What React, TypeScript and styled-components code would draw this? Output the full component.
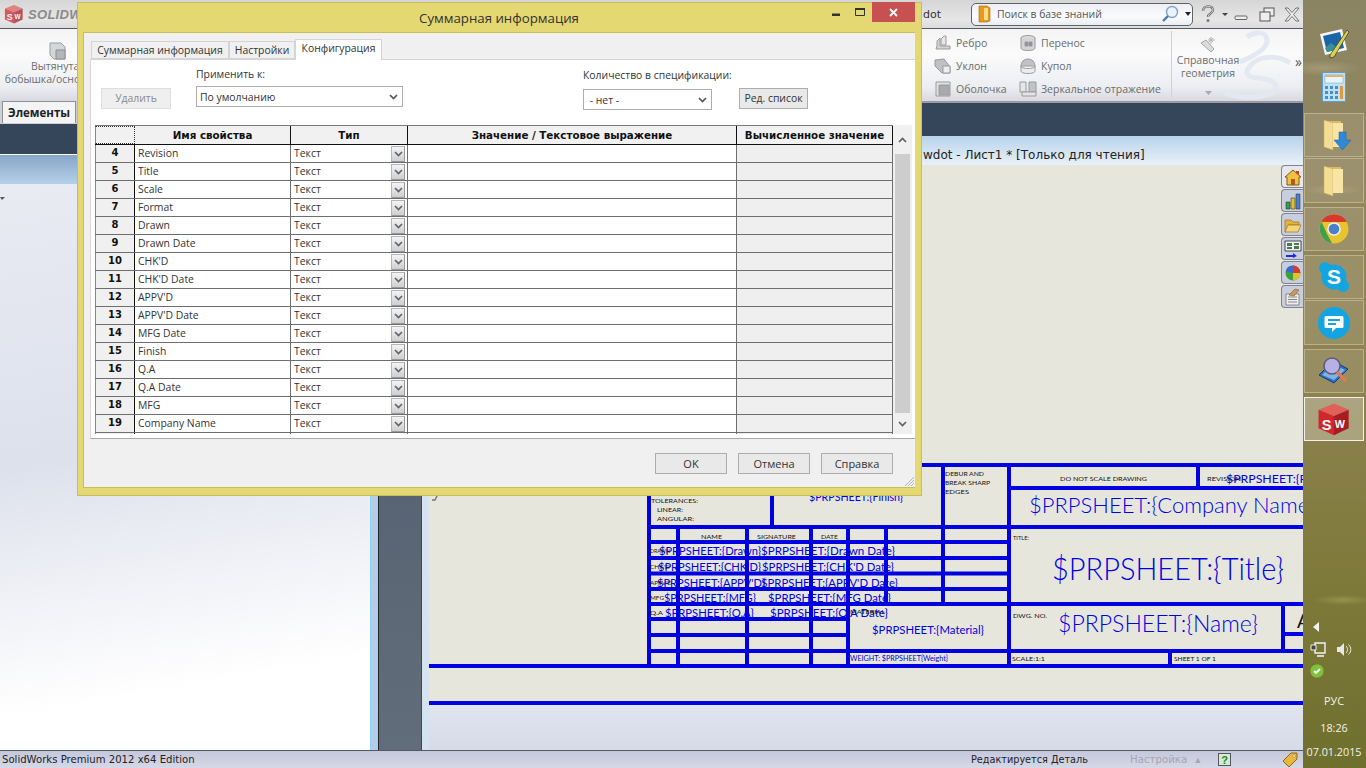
import React from "react";
import styled, { createGlobalStyle } from "styled-components";

const UI = `"Open Sans", "Noto Sans", "Liberation Sans", sans-serif`;
const TAHOMA = `"DejaVu Sans", "Noto Sans", sans-serif`;

const Global = createGlobalStyle`
  html, body { margin: 0; padding: 0; width: 1366px; height: 768px; overflow: hidden; background: #fff; }
  * { box-sizing: border-box; }
`;

const Page = styled.div`
  position: relative; display: flex; width: 1366px; height: 768px; overflow: hidden;
  font-family: ${UI}; font-size: 10.4px; color: #222;
`;
const AppWin = styled.div`display: flex; flex-direction: column; width: 1303px; height: 768px;`;

const Gapped = styled.svg<{ $ml?: number; $mt?: number }>`
  flex: none; margin-left: ${p => p.$ml ?? 0}px; margin-top: ${p => p.$mt ?? 0}px;
`;

/* ---------- title bar ---------- */
const TitleBar = styled.div`
  display: flex; align-items: center; height: 29px; flex: none; padding-left: 4px;
  background: linear-gradient(#d6d6d6, #e6e6e6 70%, #dcdcdc); border-bottom: 1px solid #555a62;
`;
const Brand = styled.span`
  margin-left: 4px; font: italic bold 13px "Liberation Sans", sans-serif; color: #8a8a8a; letter-spacing: .3px;
`;
const TitleRight = styled.div`
  margin-left: auto; display: flex; align-items: center; width: 381px; height: 100%; flex: none;
`;
const DocName = styled.span`
  width: 49px; flex: none; padding-left: 1px; font: 11px ${TAHOMA}; color: #333;
`;
const SearchBox = styled.div`
  display: flex; align-items: center; flex: none; width: 222px; height: 23px; padding: 0 1px 0 6px; gap: 6px;
  border: 1px solid #5d6168; border-radius: 5px; background: linear-gradient(#eef0f6, #fafbfd 60%, #e8ecf4);
  font: 10.4px ${UI}; color: #555;
`;
const SearchText = styled.span`flex: 1; white-space: nowrap;`;
const WinTools = styled.div`display: flex; align-items: center; flex: none; margin-left: 7px; gap: 6px;`;

/* ---------- ribbon ---------- */
const Ribbon = styled.div`
  position: relative; display: flex; height: 72px; flex: none; overflow: hidden;
  background: linear-gradient(#f4f4f4, #fbfbfb 35%, #eceef2 80%, #d9dae0);
`;
const BigTool = styled.div`
  display: flex; flex-direction: column; align-items: center; width: 98px; padding-top: 13px; margin-left: 9px;
  font: 10.5px/13px ${UI}; color: #6e6e6e; text-align: center; white-space: nowrap;
`;
const Watermark = styled.svg`position: absolute; left: 1222px; top: 0;`;
const RibbonRight = styled.div`
  position: relative; margin-left: auto; display: flex; width: 369px; padding-top: 2px;
`;
const ToolCols = styled.div`display: grid; grid-template-columns: 85px 152px; grid-auto-rows: 23px; align-items: center;`;
const SmallTool = styled.div`
  display: flex; align-items: center; gap: 4px; font: 10.5px ${UI}; color: #6b6b6b; white-space: nowrap;
`;
const RefTool = styled.div`
  display: flex; flex-direction: column; align-items: center; width: 73px; padding-top: 5px;
  border-left: 1px solid #cfd0d4; height: 66px;
  font: 10.5px/13px ${UI}; color: #6e6e6e; text-align: center;
`;
const More = styled.span`position: absolute; right: 1px; top: 23px; font: 14px ${UI}; color: #555;`;

/* ---------- workspace ---------- */
const Workspace = styled.div`display: flex; flex: 1; min-height: 0;`;
const LeftPane = styled.div`
  display: flex; flex-direction: column; width: 379px; flex: none;
  border-right: 1px solid #20262e;
`;
const TabStrip = styled.div`display: flex; height: 23px; flex: none; padding-left: 2px; background: #cfd0d6;`;
const MainTab = styled.div`
  width: 74px; height: 22px; padding-left: 5px; background: #f4f4f4; border: 1px solid #8b8f96; border-bottom: 0;
  font: bold 11.5px/21px ${UI}; color: #222;
`;
const PaneHead = styled.div`height: 31px; flex: none; background: #36465a; border-bottom: 1px solid #fff;`;
const PaneBand = styled.div`
  height: 29px; flex: none; background: linear-gradient(#87a6c8, #b6d0e8); border-right: 7px solid #a9c6e4;
`;
const PaneBody = styled.div`
  position: relative; flex: 1; background: linear-gradient(170deg, #e9ebf3, #dde1ec 45%, #f3f4f8 70%, #ffffff 85%);
  border-right: 7px solid #b4cde6; box-shadow: inset -1px 0 0 #8fd0f5;
`;
const PaneCaret = styled.i`
  position: absolute; left: 0; top: 13px; width: 0; height: 0;
  border: 3px solid transparent; border-top-color: #555; border-left-width: 2px;
`;
const Slate = styled.div`
  width: 43px; flex: none; background: linear-gradient(#4b5768, #626d7b); border-right: 1px solid #3f4752;
`;
const DocPane = styled.div`display: flex; flex-direction: column; flex: 1; min-width: 0;`;
const DarkBand = styled.div`height: 35px; flex: none; background: #36465a; border-top: 2px solid #9a9ca2;`;
const DocTitle = styled.div`
  height: 29px; flex: none; padding-left: 501px; background: linear-gradient(#b9d3ea, #e8f1f8);
  font: 12px/38px ${TAHOMA}; color: #222; white-space: nowrap;
`;
const SheetWrap = styled.div`
  display: flex; flex-direction: column; flex: 1; min-height: 0; padding-left: 7px;
  background: linear-gradient(#d8e4f2, #d5e2f0);
`;
const Sheet = styled.div`
  position: relative; height: 540px; flex: none; background: #e6e6dc;
`;
const Below = styled.div`flex: 1; background: linear-gradient(#e0e4ef, #d6dbe8);`;
const Drawing = styled.svg`display: block;`;
const SideTabs = styled.div`position: absolute; right: 0; top: 0; display: flex; flex-direction: column;`;
const SideTab = styled.div<{ $first?: boolean }>`
  display: flex; align-items: center; justify-content: center; width: 22px; height: 23px; margin-bottom: 1px;
  background: ${p => (p.$first ? "#e6e8ee" : "#c9cede")};
  border: 1px solid #7e8494; border-right: 0; border-radius: 4px 0 0 4px;
`;

/* ---------- status bar ---------- */
const StatusBar = styled.div`
  display: flex; align-items: center; height: 18px; flex: none; padding-left: 2px;
  background: linear-gradient(#c5c8dc, #d6d8e6); border-top: 1px solid #555a62;
  font: 10.1px ${TAHOMA}; color: #222; white-space: nowrap;
`;
const StatusEdit = styled.span`margin-left: auto; width: 159px; font-size: 9.7px;`;
const StatusCfg = styled.span`width: 88px; font-size: 10.2px; color: #a3a6b2;`;
const StatusArrow = styled.span`margin-left: 8px;`;
const StatusHelp = styled.span`
  display: inline-flex; align-items: center; justify-content: center; width: 13px; height: 13px;
  border: 1px solid #556; background: #d6ead0; color: #1b8a1b; font: bold 11px "Liberation Sans", sans-serif;
`;
const StatusTag = styled.span`margin-left: 51px; margin-right: 5px; display: flex;`;

/* ---------- desktop strip ---------- */
const Desktop = styled.div`
  display: flex; flex-direction: column; width: 63px; height: 768px; flex: none; padding: 21px 2px 0 1px; color: #fff;
  background:
    radial-gradient(ellipse 40px 8px at 20px 68px, rgba(190,180,140,.45), transparent),
    radial-gradient(ellipse 30px 5px at 30px 190px, rgba(190,175,120,.35), transparent),
    radial-gradient(ellipse 30px 5px at 40px 600px, rgba(200,190,110,.35), transparent),
    linear-gradient(#8b8462 0, #93875f 25%, #8d8252 50%, #7e7a3a 75%, #6f6f2e 100%);
`;
const Launcher = styled.div`display: flex; justify-content: center; align-items: center; height: 44px;`;
const Tile = styled.div<{ $gap?: number; $h?: number; $active?: boolean }>`
  display: flex; align-items: center; justify-content: center; flex: none;
  height: ${p => p.$h ?? 44}px; margin-top: ${p => p.$gap ?? 0}px;
  background: ${p => (p.$active ? "rgba(255,255,255,.28)" : "rgba(255,255,255,.09)")};
  border: ${p => (p.$active ? "1px solid #f4f2e4" : "1px solid rgba(235,225,185,.42)")};
`;
const Tray = styled.div`
  margin-top: auto; display: flex; flex-direction: column; align-items: center; padding-bottom: 8px;
  font: 10.8px/16px ${UI}; color: #f3f3ea; text-align: center;
`;
const TrayRow = styled.div<{ $mt?: number }>`
  display: flex; align-self: stretch; gap: 10px; padding-left: 6px; align-items: flex-start; margin-top: ${p => p.$mt ?? 0}px;
`;
const TrayText = styled.div<{ $mt?: number }>`margin-top: ${p => p.$mt ?? 0}px; white-space: nowrap;`;

/* ---------- dialog ---------- */
const Dialog = styled.div`
  position: absolute; left: 77px; top: 2px; width: 845px; height: 494px; display: flex; flex-direction: column;
  background: #e4d872; border: 1px solid #c8bc5c; padding: 0 6px 7px 5px; z-index: 5;
`;
const DlgHead = styled.div`position: relative; height: 29px; flex: none; display: flex; align-items: center; justify-content: center;`;
const DlgTitle = styled.span`font: 13.25px ${UI}; color: #333; margin-top: 1px;`;
const DlgControls = styled.div`position: absolute; right: 0; top: -1px; display: flex; align-items: flex-start;`;
const Close = styled.div`
  width: 43px; height: 20px; background: #c75050; color: #fff;
  display: flex; align-items: center; justify-content: center;
`;
const CtlBtn = styled.div`display: flex; align-items: center; justify-content: center; width: 24px; height: 20px;`;
const DlgInner = styled.div`
  position: relative; flex: 1; display: flex; flex-direction: column; background: #f0f0f0;
  border: 1px solid #c8bc5c; border-width: 1px 0 1px 1px; padding-top: 6px;
`;
const Tabs = styled.div`display: flex; align-items: flex-end; height: 20px; flex: none; margin-left: 7px;`;
const Tab = styled.div<{ $active?: boolean; $w: number }>`
  width: ${p => p.$w}px; height: ${p => (p.$active ? 21 : 18)}px; margin-bottom: ${p => (p.$active ? -1 : 0)}px;
  text-align: center; position: relative; z-index: 1;
  background: ${p => (p.$active ? "#fff" : "#f0f0f0")};
  border: 1px solid #d4d4d4; border-bottom: ${p => (p.$active ? "0" : "1px solid #d4d4d4")};
  font: 10.4px/${p => (p.$active ? 17 : 16)}px ${UI}; color: #333; white-space: nowrap;
`;
const TabPage = styled.div`
  height: 380px; flex: none; margin-left: 6px; padding-left: 1px;
  background: #fff; border-top: 1px solid #d4d4d4; border-bottom: 1px solid #a8a8a8; border-left: 1px solid #d8d8d8;
  display: flex; flex-direction: column;
`;
const FormRow = styled.div`display: flex; height: 65px; flex: none; padding-left: 9px;`;
const FlatBtn = styled.div<{ $disabled?: boolean; $w: number; $mt: number; $ml?: number }>`
  width: ${p => p.$w}px; height: 21px; margin-top: ${p => p.$mt}px; margin-left: ${p => p.$ml ?? 0}px; text-align: center; flex: none;
  background: ${p => (p.$disabled ? "#efefef" : "#e9e9e9")};
  border: 1px solid ${p => (p.$disabled ? "#dedede" : "#adadad")};
  font: 10.4px/19px ${UI}; color: ${p => (p.$disabled ? "#8a8a8a" : "#333")}; white-space: nowrap;
`;
const Field = styled.div<{ $ml: number; $w: number }>`
  display: flex; flex-direction: column; margin-left: ${p => p.$ml}px; width: ${p => p.$w}px; flex: none;
`;
const FieldLabel = styled.span<{ $mt: number; $mb: number }>`
  margin-top: ${p => p.$mt}px; margin-bottom: ${p => p.$mb}px; font: 10.4px/15px ${UI}; color: #333; white-space: nowrap;
`;
const Select = styled.div`
  display: flex; align-items: center; justify-content: space-between; height: 21px; padding: 0 4px 0 3px;
  border: 1px solid #adadad; background: #fff; font: 10.4px ${UI}; color: #333;
`;
const GridWrap = styled.div`display: flex; height: 309px; flex: none; margin-left: 3px; width: 817px;`;
const GridTable = styled.div`width: 798px; height: 309px; overflow: hidden; border-top: 1px solid #777;`;
const GridRow = styled.div<{ $head?: boolean }>`
  display: grid; grid-template-columns: 40px 156px 117px 329px 156px;
  height: ${p => (p.$head ? 19 : 18)}px;
  border-bottom: 1px solid ${p => (p.$head ? "#111" : "#6e6e6e")};
`;
const HeadCell = styled.div`
  background: #f1f1f1; border-right: 1px solid #111; text-align: center;
  font: bold 10.3px/18px ${TAHOMA}; color: #111; white-space: nowrap;
`;
const Corner = styled.div`
  background: #f1f1f1; border: 1px dotted #333; border-left: 1px solid #888;
`;
const NumCell = styled.div`
  background: #f0f0f0; border-right: 1px solid #111; border-left: 1px solid #888; text-align: center;
  font: bold 10px/15px ${TAHOMA}; color: #111;
`;
const NameCell = styled.div`
  padding-left: 3px; background: #fff; border-right: 1px solid #6e6e6e; font: 10.4px/16px ${UI}; color: #333; white-space: nowrap;
`;
const TypeCell = styled(NameCell)`display: flex; justify-content: space-between; padding-right: 2px;`;
const ValueCell = styled.div`background: #fff; border-right: 1px solid #6e6e6e;`;
const CalcCell = styled.div`background: #efefef; border-right: 1px solid #6e6e6e;`;
const DropBtn = styled.div`
  display: flex; align-items: center; justify-content: center; width: 14px; height: 16px; margin-top: 1px;
  background: linear-gradient(#f4f4f4, #cfcfcf); border: 1px solid #a5a5a5; border-color: #b5b5b5 #999 #999 #b5b5b5;
`;
const Scroll = styled.div`
  display: flex; flex-direction: column; align-items: center; width: 19px; height: 309px; background: #f0f0f0; padding: 0 1px;
`;
const ScrollBtn = styled.div<{ $h: number }>`display: flex; align-items: center; justify-content: center; height: ${p => p.$h}px; flex: none;`;
const ScrollThumb = styled.div`width: 15px; height: 259px; flex: none; background: #cdcdcd;`;
const DlgFooter = styled.div`display: flex; justify-content: flex-end; gap: 11px; padding: 14px 22px 0 0;`;
const FootBtn = styled.div`
  width: 72px; height: 21px; background: #e9e9e9; border: 1px solid #adadad; text-align: center;
  font: 11px/19px ${UI}; color: #333;
`;
const Grip = styled.svg`position: absolute; right: 0; bottom: 0;`;

/* ---------- small drawings ---------- */
const Chev = ({ c = "#555" }: { c?: string }) => (
  <svg width="9" height="6" viewBox="0 0 9 6"><path d="M1 1l3.500 3.500L8 1" fill="none" stroke={c} strokeWidth="1.700" /></svg>
);
const ChevUp = () => (
  <svg width="9" height="6" viewBox="0 0 9 6"><path d="M1 5l3.500-3.500L8 5" fill="none" stroke="#606060" strokeWidth="1.700" /></svg>
);

const SwCube = ({ s = 22, op = 1 }: { s?: number; op?: number }) => (
  <svg width={s} height={s} viewBox="0 0 44 44" opacity={op}>
    <path d="M22 2l19 8-19 8-20-8z" fill="#e2605a" />
    <path d="M2 10l20 8v25L2 34z" fill="#d0262c" />
    <path d="M22 18l19-8v24l-19 9z" fill="#a81c22" />
    <text x="6" y="36" fontFamily="Liberation Sans" fontWeight="bold" fontSize="19" fill="#fff">S</text>
    <text x="23" y="34" fontFamily="Liberation Sans" fontWeight="bold" fontSize="14" fill="#fff">W</text>
  </svg>
);

type GlyphKind = "rib" | "draft" | "shell" | "wrap" | "dome" | "mirror";
const RibbonGlyph = ({ k }: { k: GlyphKind }) => {
  const st = { stroke: "#9a9a9a", strokeWidth: 1, fill: "#d4d4d6" };
  return (
    <svg width="18" height="18" viewBox="0 0 18 18">
      {k === "rib" && (<g {...st}><path d="M2 15h14v-3H6V4L3 7v5z" /><path d="M7 11V5l3-3h2v9z" fill="#e6e6e8" /></g>)}
      {k === "draft" && (<g {...st}><path d="M1 3l9-1 6 8v6H8L1 9z" fill="#bfbfc4" /><path d="M9 9h7v7H9z" fill="#eeeeee" /></g>)}
      {k === "shell" && (<g {...st}><path d="M2 2h14v14H2z" fill="#e2e2e4" /><path d="M5 5h10v10H5z" fill="#a9a9ae" /></g>)}
      {k === "wrap" && (<g {...st}><ellipse cx="9" cy="4" rx="7" ry="2.500" fill="#dadadc" /><path d="M2 4v10c0 1.500 3 2.500 7 2.500s7-1 7-2.500V4" /><path d="M6 8h3v4H6zM10 8h3v4h-3z" fill="#8f8f94" /></g>)}
      {k === "dome" && (<g {...st}><path d="M2 9c0-4 3-7 7-7s7 3 7 7z" fill="#c2c2c6" /><path d="M2 9v5c0 1.500 3 2.500 7 2.500s7-1 7-2.500V9c0 1.500-3 2.500-7 2.500S2 10.500 2 9z" fill="#ececee" /></g>)}
      {k === "mirror" && (<g {...st}><path d="M1 2h6v10H1z" fill="#e6e6e8" /><path d="M10 2h7v10h-7z" fill="#c2c2c6" /><path d="M3 12h14v4H3z" fill="#e4e4e6" /></g>)}
    </svg>
  );
};

const FolderIcon = ({ arrow }: { arrow?: boolean }) => (
  <svg width="34" height="34" viewBox="0 0 34 34">
    <path d="M9 3h15v24H9z" fill="#d9bc62" />
    <path d="M7 2l9 3v27l-9-3z" fill="#f3dd94" stroke="#c9a955" strokeWidth=".5" />
    <path d="M16 5h10v24H16z" fill="#f7e5a6" />
    {arrow && <path d="M22 14h7v8h5l-8.500 10L17 22h5z" fill="#2f88d8" stroke="#1c5fa8" strokeWidth=".5" />}
  </svg>
);
const ChromeIcon = () => (
  <svg width="30" height="30" viewBox="-15 -15 30 30">
    <circle r="14.500" fill="#e8c42e" />
    <path d="M-12.500-7.200A14.500 14.500 0 0 1 12.500-7.200L0-7.200z" fill="#d8392b" />
    <path d="M-12.500-7.200L-7 5 -2 14.300A14.500 14.500 0 0 1-12.500-7.200z" fill="#3f9f4a" />
    <path d="M-12.500-7.500A14.500 14.500 0 0 1 0-14.500A14.500 14.500 0 0 1 12.600-7.200L0-7z" fill="#d8392b" />
    <circle r="6.800" fill="#eef2f5" />
    <circle r="5.300" fill="#4b80c8" />
  </svg>
);
const SkypeIcon = () => (
  <svg width="32" height="32" viewBox="0 0 32 32">
    <circle cx="16" cy="16" r="12.500" fill="#12a5e2" />
    <circle cx="7" cy="7" r="6" fill="#12a5e2" />
    <circle cx="25" cy="25" r="6" fill="#12a5e2" />
    <text x="16" y="23" textAnchor="middle" fontFamily="Liberation Sans" fontWeight="bold" fontSize="21" fill="#fff">S</text>
  </svg>
);
const ChatIcon = () => (
  <svg width="32" height="32" viewBox="0 0 32 32">
    <circle cx="16" cy="16" r="16" fill="#12a5e2" />
    <path d="M8 9h16a1.500 1.500 0 0 1 1.500 1.500v9A1.500 1.500 0 0 1 24 21h-6l-4 4v-4H8a1.500 1.500 0 0 1-1.500-1.500v-9A1.500 1.500 0 0 1 8 9z" fill="#fff" />
    <path d="M10 13h12M10 17h8" stroke="#12a5e2" strokeWidth="1.800" />
  </svg>
);
const BookSearch = () => (
  <svg width="32" height="32" viewBox="0 0 32 32">
    <path d="M1 20L15 6l15 8-14 14z" fill="#2f6fc0" stroke="#123e80" />
    <path d="M4 20L15 9l12 6-11 10z" fill="#7fb2e6" />
    <circle cx="14" cy="11" r="8" fill="#b7b0e2" stroke="#5a5a7a" strokeWidth="1.500" />
    <path d="M19 17l9 9" stroke="#e07a50" strokeWidth="3.500" />
  </svg>
);
const PenIcon = () => (
  <svg width="34" height="34" viewBox="0 0 34 34">
    <path d="M3 8l22-5 5 21-22 5z" fill="#f5f5f5" />
    <path d="M6 10l17-4 4 16-17 4z" fill="#1d63a8" />
    <path d="M8 22l6-5 8 6-12 3z" fill="#3a8f9a" />
    <path d="M13 29L30 4l2 2-15 25-4 1z" fill="#d9d24a" stroke="#333" strokeWidth=".7" />
  </svg>
);
const CalcIcon = () => (
  <svg width="24" height="30" viewBox="0 0 24 30">
    <rect x=".5" y=".5" width="23" height="29" fill="#bfe0f5" stroke="#5b9fd0" />
    <rect x="3" y="3" width="18" height="8" fill="#e8f4fc" stroke="#7aa" strokeWidth=".5" />
    <rect x="3" y="3" width="18" height="2" fill="#e6b070" />
    <path d="M3 14h3v3H3zM8 14h3v3H8zM13 14h3v3h-3zM3 19h3v3H3zM8 19h3v3H8zM13 19h3v3h-3zM3 24h3v3H3zM8 24h3v3H8zM13 24h3v3h-3z" fill="#4a8fc4" />
    <path d="M18 14h3v13h-3z" fill="#e09a3c" />
  </svg>
);

const sideIcons = [
  <svg key="a" width="18" height="18" viewBox="0 0 18 18"><path d="M1 9l8-7 8 7h-2v8H3V9z" fill="#f0c040" stroke="#7a5a14" /><path d="M7 11h4v6H7z" fill="#b05a20" /><path d="M12 3h3v4l-3-2z" fill="#c8402c" /></svg>,
  <svg key="b" width="18" height="18" viewBox="0 0 18 18"><path d="M2 10h4v7H2z" fill="#3aa03a" stroke="#222" strokeWidth=".5" /><path d="M7 6h4v11H7z" fill="#e0c030" stroke="#222" strokeWidth=".5" /><path d="M12 2h4v15h-4z" fill="#4a80d0" stroke="#222" strokeWidth=".5" /></svg>,
  <svg key="c" width="18" height="18" viewBox="0 0 18 18"><path d="M1 4h6l2 2h6v3H5l-3 7H1z" fill="#e2b23c" stroke="#9a7420" strokeWidth=".7" /><path d="M4 9h13l-3 7H1z" fill="#f4d578" stroke="#9a7420" strokeWidth=".7" /></svg>,
  <svg key="d" width="18" height="18" viewBox="0 0 18 18"><path d="M1 1h16v10H1z" fill="#eef0f4" stroke="#223" strokeWidth=".8" /><path d="M3 3h5v3H3zM10 3h5v2h-5zM10 6h5v3h-5zM3 7h5v2H3z" fill="#4a7a4a" /><path d="M2 15h7v-2l4 3-4 2v-1H2z" fill="#1a2ee0" /></svg>,
  <svg key="e" width="18" height="18" viewBox="0 0 18 18"><circle cx="9" cy="9" r="7.500" fill="#3aa03a" /><path d="M9 1.500A7.500 7.500 0 0 0 1.700 7.500L9 9z" fill="#3a6ad0" /><path d="M9 1.500A7.500 7.500 0 0 1 16.500 9H9z" fill="#d83a2c" /><path d="M9 9h7.500A7.500 7.500 0 0 1 9 16.500z" fill="#e0c030" /></svg>,
  <svg key="f" width="18" height="18" viewBox="0 0 18 18"><path d="M2 6h13v11H2z" fill="#eeeeee" stroke="#666" strokeWidth=".7" /><path d="M4 9h9M4 11.500h9M4 14h9" stroke="#888" /><path d="M5 7l6-6 4 1-5 6z" fill="#c89a5a" stroke="#6a4a20" strokeWidth=".5" /></svg>,
];

/* ---------- drawing data ---------- */
const BLUE = "#0000e0";
const H: [number, number, number][] = [
  [465, 649, 1303], [488, 1009, 1303], [527, 649, 1303], [542, 649, 1009], [558, 649, 1009], [573.500, 649, 1009], [589, 649, 1009],
  [604, 649, 1303], [619, 649, 848], [635, 649, 848], [651, 849, 1303], [651, 649, 848], [666, 429, 1303], [703, 429, 1303], [634, 1283, 1303],
];
const V: [number, number, number][] = [
  [649, 465, 666], [772, 465, 527], [943, 465, 604], [1009, 465, 666], [1198, 465, 488], [678, 527, 666], [747, 527, 666],
  [811, 527, 666], [848, 527, 666], [886, 527, 604], [1283, 604, 651], [1170, 651, 666],
];
type Lbl = [string, number, number, number, number];
const blueText: Lbl[] = [
  ["$PRPSHEET:{Title}", 1052, 580, 232, 32],
  ["$PRPSHEET:{Company Name}", 1029, 513, 286, 21],
  ["$PRPSHEET:{Name}", 1058, 632, 200, 24],
  ["$PRPSHEET:{Revision}", 1226, 483, 122, 12],
  ["$PRPSHEET:{Finish}", 809, 501, 94, 12],
  ["$PRPSHEET:{Drawn}", 659, 555, 102, 12],
  ["$PRPSHEET:{Drawn Date}", 761, 555, 134, 12],
  ["$PRPSHEET:{CHK'D}", 658, 571, 103, 12],
  ["$PRPSHEET:{CHK'D Date}", 762, 571, 132, 12],
  ["$PRPSHEET:{APPV'D}", 657, 587, 108, 12],
  ["$PRPSHEET:{APPV'D Date}", 761, 587, 137, 12],
  ["$PRPSHEET:{MFG}", 664, 602, 92, 12],
  ["$PRPSHEET:{MFG Date}", 768, 602, 123, 12],
  ["$PRPSHEET:{Q.A}", 665, 617, 89, 12],
  ["$PRPSHEET:{Q.A Date}", 770, 617, 118, 12],
  ["$PRPSHEET:{Material}", 872, 634, 112, 12],
  ["WEIGHT: $PRPSHEET{Weight}", 850, 661, 98, 7],
];
const blackText: Lbl[] = [
  ["DO NOT SCALE DRAWING", 1060, 481, 87, 6.500],
  ["REVISION", 1207, 481, 34, 6.500],
  ["TITLE:", 1013, 540, 16, 6.500],
  ["DWG. NO.", 1013, 618, 34, 6.500],
  ["SCALE:1:1", 1012, 661, 33, 6.500],
  ["SHEET 1 OF 1", 1174, 661, 42, 6.500],
  ["DEBUR AND", 945, 476, 39, 6.500],
  ["BREAK SHARP", 945, 485, 45, 6.500],
  ["EDGES", 945, 494, 24, 6.500],
  ["TOLERANCES:", 651, 503, 47, 6.500],
  ["LINEAR:", 657, 512, 26, 6.500],
  ["ANGULAR:", 657, 521, 37, 6.500],
  ["NAME", 701, 539, 21, 6.500],
  ["SIGNATURE", 757, 539, 39, 6.500],
  ["DATE", 821, 539, 17, 6.500],
  ["DRAWN", 650, 553, 20, 6.500],
  ["CHK'D", 650, 569, 20, 6.500],
  ["APPV'D", 650, 585, 22, 6.500],
  ["MFG", 650, 600, 14, 6.500],
  ["Q.A", 650, 615, 13, 6.500],
  ["MATERIAL", 850, 614, 35, 6.500],
  ["A4", 1297, 628, 24, 20],
];

const rows = ["Revision", "Title", "Scale", "Format", "Drawn", "Drawn Date", "CHK'D", "CHK'D Date", "APPV'D", "APPV'D Date", "MFG Date", "Finish", "Q.A", "Q.A Date", "MFG", "Company Name"];

export default function App() {
  return (
    <Page>
      <Global />
      <AppWin>
        <TitleBar>
          <SwCube s={20} op={0.72} />
          <Brand>SOLIDWORKS</Brand>
          <TitleRight>
            <DocName>dot</DocName>
            <SearchBox>
              <svg width="13" height="18" viewBox="0 0 13 18"><path d="M1 1h8l3 2v13l-3 1H1z" fill="#e99a1c" stroke="#a8640e" strokeWidth=".6" /><path d="M6 3h4v12H6z" fill="#f9dc8a" /></svg>
              <SearchText>Поиск в базе знаний</SearchText>
              <svg width="18" height="18" viewBox="0 0 18 18"><circle cx="11" cy="7" r="5.500" fill="#eaf3fb" stroke="#7da3c4" strokeWidth="1.400" /><path d="M7 11l-5 5" stroke="#4c7ba8" strokeWidth="2.400" /></svg>
              <svg width="6" height="4" viewBox="0 0 6 4"><path d="M0 0h6L3 4z" fill="#222" /></svg>
            </SearchBox>
            <WinTools>
              <svg width="16" height="18" viewBox="0 0 16 18"><path d="M3 6c0-6 10-6 10-1 0 4-5 3-5 7" fill="none" stroke="#666" strokeWidth="2.400" /><path d="M3 6c0-6 10-6 10-1 0 4-5 3-5 7" fill="none" stroke="#eee" strokeWidth=".8" /><circle cx="8" cy="15.500" r="1.500" fill="#777" /></svg>
              <svg width="6" height="3" viewBox="0 0 6 3"><path d="M0 0h6L3 3z" fill="#444" /></svg>
              <svg width="14" height="16" viewBox="0 0 14 16"><rect x="1" y="10" width="12" height="3.500" rx="1" fill="#eee" stroke="#666" /></svg>
              <Gapped $ml={5} width="16" height="15" viewBox="0 0 16 15"><rect x="5" y="1" width="10" height="8" fill="#eee" stroke="#555" /><rect x="1" y="5" width="10" height="9" fill="#eee" stroke="#555" /></Gapped>
              <Gapped $ml={3} width="16" height="15" viewBox="0 0 16 15"><path d="M1 1h3l4 4.500L12 1h3l-5.500 6.500L15 14h-3L8 9.500 4 14H1l5.500-6.500z" fill="#eee" stroke="#666" strokeWidth=".9" /></Gapped>
            </WinTools>
          </TitleRight>
        </TitleBar>

        <Ribbon>
          <Watermark width="76" height="72" viewBox="0 0 76 72">
            <path d="M25 8C32 3 44 1 45 11C46 20 30 28 18 33" fill="none" stroke="#e4e8f0" strokeWidth="5" />
            <path d="M68 34C55 25 38 28 31 34C22 42 22 48 36 49C48 50 56 54 54 60C50 68 22 72 3 64" fill="none" stroke="#e4e8f0" strokeWidth="5" />
          </Watermark>
          <BigTool>
            <svg width="18" height="18" viewBox="0 0 18 18"><path d="M1 1h11l4 4v12H5l-4-4z" fill="#d5d6da" stroke="#9c9da2" /><path d="M7 8h9v9H7z" fill="#b5b6bb" stroke="#8c8d92" /></svg>
            <span>Вытянутая</span>
            <span>бобышка/основание</span>
          </BigTool>
          <RibbonRight>
            <ToolCols>
              <SmallTool><RibbonGlyph k="rib" />Ребро</SmallTool>
              <SmallTool><RibbonGlyph k="wrap" />Перенос</SmallTool>
              <SmallTool><RibbonGlyph k="draft" />Уклон</SmallTool>
              <SmallTool><RibbonGlyph k="dome" />Купол</SmallTool>
              <SmallTool><RibbonGlyph k="shell" />Оболочка</SmallTool>
              <SmallTool><RibbonGlyph k="mirror" />Зеркальное отражение</SmallTool>
            </ToolCols>
            <RefTool>
              <svg width="18" height="18" viewBox="0 0 18 18"><path d="M2 7l5-3 8 9-3 3z" fill="#dcdcdc" stroke="#a5a5a5" /><path d="M12 1v7M9 4h7M10 2l4 4M14 2l-4 4" stroke="#b5b5b5" /></svg>
              <span>Справочная</span>
              <span>геометрия</span>
              <Gapped $mt={11} width="7" height="4" viewBox="0 0 7 4"><path d="M0 0h7L3.500 4z" fill="#aaa" /></Gapped>
            </RefTool>
            <More>»</More>
          </RibbonRight>
        </Ribbon>

        <Workspace>
          <LeftPane>
            <TabStrip><MainTab>Элементы</MainTab></TabStrip>
            <PaneHead />
            <PaneBand />
            <PaneBody><PaneCaret /></PaneBody>
          </LeftPane>
          <Slate />
          <DocPane>
            <DarkBand />
            <DocTitle>wdot - Лист1 * [Только для чтения]</DocTitle>
            <SheetWrap>
              <Sheet>
                <Drawing width="874" height="540" viewBox="429 165 874 540">
                  <path d="M431 493h5l1 3-2 4h-3" fill="none" stroke="#777" strokeWidth="1.500" />
                  {H.map(([y, a, b]) => <rect key={`h${y}${a}`} x={a} y={y - 2} width={b - a} height={4} fill={BLUE} />)}
                  {V.map(([x, a, b]) => <rect key={`v${x}${a}`} x={x - 2} y={a - 2} width={4} height={b - a + 4} fill={BLUE} />)}
                  {blueText.map(([t, x, y, w, s]) => (
                    <text key={t} x={x} y={y} textLength={w} lengthAdjust="spacingAndGlyphs" fontFamily="Lato, 'Liberation Sans', sans-serif" fontWeight={s > 12 ? 300 : 400} fontSize={s} fill={BLUE}>{t}</text>
                  ))}
                  {blackText.map(([t, x, y, w, s]) => (
                    <text key={t} x={x} y={y} textLength={w} lengthAdjust="spacingAndGlyphs" fontFamily="Lato, 'Liberation Sans', sans-serif" fontSize={s} fill="#111">{t}</text>
                  ))}
                </Drawing>
                <SideTabs>
                  {sideIcons.map((ic, i) => <SideTab key={i} $first={i === 0}>{ic}</SideTab>)}
                </SideTabs>
              </Sheet>
              <Below />
            </SheetWrap>
          </DocPane>
        </Workspace>

        <StatusBar>
          <span>SolidWorks Premium 2012 x64 Edition</span>
          <StatusEdit>Редактируется Деталь</StatusEdit>
          <StatusCfg>Настройка<StatusArrow>▴</StatusArrow></StatusCfg>
          <StatusHelp>?</StatusHelp>
          <StatusTag>
            <svg width="16" height="15" viewBox="0 0 16 15"><path d="M1 9L9 1h6v6l-8 8z" fill="#e8b83c" stroke="#8a6a14" /><circle cx="12" cy="4" r="1.300" fill="#fff" stroke="#8a6a14" strokeWidth=".5" /></svg>
          </StatusTag>
        </StatusBar>
      </AppWin>

      <Desktop>
        <Launcher><PenIcon /></Launcher>
        <Launcher><CalcIcon /></Launcher>
        <Tile $gap={4}><FolderIcon arrow /></Tile>
        <Tile $gap={1} $h={45}><FolderIcon /></Tile>
        <Tile $gap={4}><ChromeIcon /></Tile>
        <Tile $gap={4}><SkypeIcon /></Tile>
        <Tile $gap={1} $h={45}><ChatIcon /></Tile>
        <Tile $gap={4}><BookSearch /></Tile>
        <Tile $gap={4} $active><SwCube s={34} /></Tile>
        <Tray>
          <TrayRow>
            <Gapped $ml={2} width="8" height="10" viewBox="0 0 8 10"><path d="M7 0v10L1 5z" fill="#f4f4f4" /></Gapped>
          </TrayRow>
          <TrayRow $mt={10}>
            <svg width="16" height="16" viewBox="0 0 16 16"><path d="M5 1h10v10H5z" fill="none" stroke="#f2f2f2" strokeWidth="1.400" /><path d="M1 3h5v5H1z" fill="#444" stroke="#f2f2f2" /><path d="M7 14h7" stroke="#f2f2f2" strokeWidth="1.600" /></svg>
            <svg width="16" height="15" viewBox="0 0 16 15"><path d="M1 5h3l4-4v13l-4-4H1z" fill="#e8e8e8" /><path d="M10 4c2 2 2 5 0 7M12.500 2.500c3 3 3 7 0 10" fill="none" stroke="#eee" /></svg>
          </TrayRow>
          <TrayRow $mt={6}>
            <svg width="14" height="14" viewBox="0 0 14 14"><path d="M7 .5C11 .5 13.500 3 13.500 7S11 13.500 7 13.500.5 11 .5 7 3 .5 7 .5z" fill="#7fc23a" /><path d="M4 7l2 2 4-4" fill="none" stroke="#fff" strokeWidth="1.800" /></svg>
          </TrayRow>
          <TrayText $mt={15}>РУС</TrayText>
          <TrayText $mt={11}>18:26</TrayText>
          <TrayText $mt={8}>07.01.2015</TrayText>
        </Tray>
      </Desktop>

      <Dialog>
        <DlgHead>
          <DlgTitle>Суммарная информация</DlgTitle>
          <DlgControls>
            <CtlBtn><svg width="8" height="8" viewBox="0 0 8 8"><rect y="5.500" width="8" height="2.500" fill="#333" /></svg></CtlBtn>
            <CtlBtn><svg width="10" height="8" viewBox="0 0 10 8"><path d="M.5 .5h9v7h-9z" fill="none" stroke="#333" /><path d="M0 0h10v2H0z" fill="#333" /></svg></CtlBtn>
            <Close><svg width="9" height="9" viewBox="0 0 9 9"><path d="M1 1l7 7M8 1L1 8" stroke="#fff" strokeWidth="1.800" /></svg></Close>
          </DlgControls>
        </DlgHead>
        <DlgInner>
          <Tabs>
            <Tab $w={138}>Суммарная информация</Tab>
            <Tab $w={66}>Настройки</Tab>
            <Tab $w={87} $active>Конфигурация</Tab>
          </Tabs>
          <TabPage>
            <FormRow>
              <FlatBtn $disabled $w={70} $mt={28}>Удалить</FlatBtn>
              <Field $ml={25} $w={207}>
                <FieldLabel $mt={7} $mb={4}>Применить к:</FieldLabel>
                <Select>По умолчанию<Chev /></Select>
              </Field>
              <Field $ml={180} $w={129}>
                <FieldLabel $mt={8} $mb={6}>Количество в спецификации:</FieldLabel>
                <Select>&nbsp;- нет -<Chev /></Select>
              </Field>
              <FlatBtn $w={69} $mt={28} $ml={27}>Ред. список</FlatBtn>
            </FormRow>
            <GridWrap>
              <GridTable>
                <GridRow $head>
                  <Corner />
                  <HeadCell>Имя свойства</HeadCell>
                  <HeadCell>Тип</HeadCell>
                  <HeadCell>Значение / Текстовое выражение</HeadCell>
                  <HeadCell>Вычисленное значение</HeadCell>
                </GridRow>
                {rows.map((r, i) => (
                  <GridRow key={r}>
                    <NumCell>{i + 4}</NumCell>
                    <NameCell>{r}</NameCell>
                    <TypeCell>Текст<DropBtn><Chev c="#5c6670" /></DropBtn></TypeCell>
                    <ValueCell />
                    <CalcCell />
                  </GridRow>
                ))}
                <GridRow>
                  <NumCell />
                  <NameCell />
                  <TypeCell />
                  <ValueCell />
                  <CalcCell />
                </GridRow>
              </GridTable>
              <Scroll>
                <ScrollBtn $h={29}><ChevUp /></ScrollBtn>
                <ScrollThumb />
                <ScrollBtn $h={21}><Chev c="#606060" /></ScrollBtn>
              </Scroll>
            </GridWrap>
          </TabPage>
          <DlgFooter>
            <FootBtn>OK</FootBtn>
            <FootBtn>Отмена</FootBtn>
            <FootBtn>Справка</FootBtn>
          </DlgFooter>
          <Grip width="12" height="12" viewBox="0 0 12 12">
            <path d="M11 2L2 11M11 5l-6 6M11 8l-3 3" stroke="#b5b5b5" strokeWidth="1" />
          </Grip>
        </DlgInner>
      </Dialog>
    </Page>
  );
}
